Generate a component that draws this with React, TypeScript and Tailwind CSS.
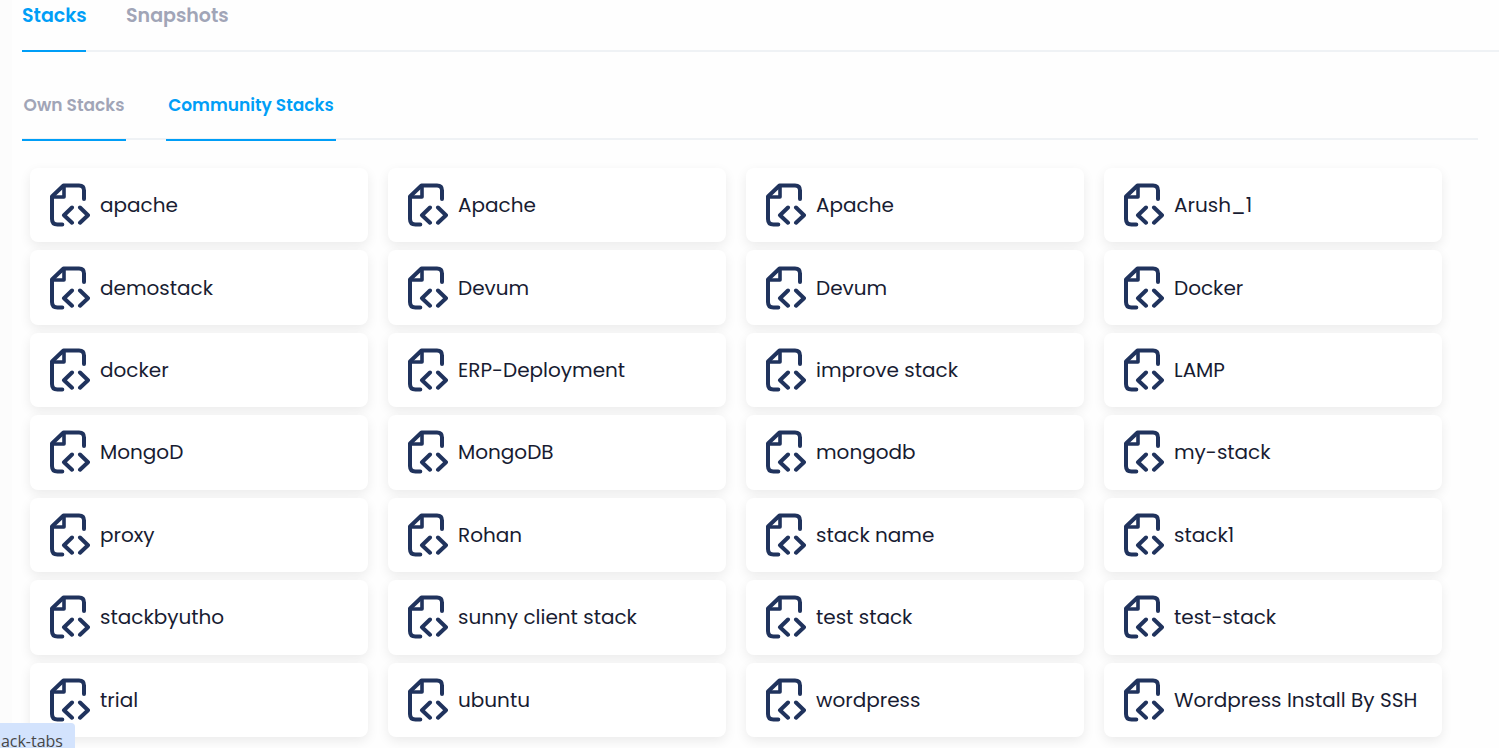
const stacks = [
  "apache", "Apache", "Apache", "Arush_1",
  "demostack", "Devum", "Devum", "Docker",
  "docker", "ERP-Deployment", "improve stack", "LAMP",
  "MongoD", "MongoDB", "mongodb", "my-stack",
  "proxy", "Rohan", "stack name", "stack1",
  "stackbyutho", "sunny client stack", "test stack", "test-stack",
  "trial", "ubuntu", "wordpress", "Wordpress Install By SSH",
];

function CodeFileIcon() {
  return (
    <svg
      className="h-11 w-10 shrink-0"
      viewBox="0 0 40 44"
      fill="none"
      stroke="#20335d"
      strokeWidth="4"
      strokeLinecap="round"
      strokeLinejoin="round"
      aria-hidden="true"
    >
      <path d="M12.300 41.500H7.500C3.800 41.500 2 39.500 2 36V13.500L13.500 2.500H29C32.500 2.500 34 4.200 34 7.500V16" />
      <path d="M14 3.500V14H3" strokeWidth="3.600" />
      <path d="M22 24.500L14 32.200L22 39.700M30 24.500L38 32.200L30 39.700" />
    </svg>
  );
}

export default function App() {
  return (
    <main className="h-screen overflow-hidden border-l-[12px] border-[#fcfcfc] bg-[#fefefe] font-[Poppins,Inter,sans-serif]">
      <nav aria-label="Sections" className="ml-2.5 flex h-[52px] gap-10 border-b-2 border-[#eff2f5] text-[19px] leading-7 font-semibold">
        <button className="-mb-0.5 w-16 border-b-2 border-[#009ef7] pb-[18px] text-[#009ef7]">Stacks</button>
        <button className="-mb-0.5 border-b-2 border-transparent pb-[18px] text-[#a1a5b7]">Snapshots</button>
      </nav>
      <nav aria-label="Stack lists" className="mt-8 mr-[21px] ml-2.5 flex h-14 gap-10 border-b-2 border-[#eff2f5] text-[17px] leading-7 font-semibold">
        <button className="-mb-[3px] min-w-[104px] border-b-2 border-[#009ef7] pb-3.5 text-[#a1a5b7]">Own Stacks</button>
        <button className="-mb-[3px] min-w-[170px] border-b-2 border-[#009ef7] pb-3.5 text-[#009ef7]">Community Stacks</button>
      </nav>
      <ul className="mt-7 mr-[57px] ml-[18px] grid min-h-[569px] auto-rows-fr grid-cols-4 gap-x-5 gap-y-2">
        {stacks.map((name, index) => (
          <li key={index} className="flex">
            <button className="flex w-full items-center gap-2.5 rounded-lg bg-white px-5 text-left text-xl text-[#181c32] shadow-[0_4px_12px_rgba(0,0,0,0.08)]">
              <CodeFileIcon />
              <span className="whitespace-nowrap">{name}</span>
            </button>
          </li>
        ))}
      </ul>
      <div className="fixed bottom-0 left-0 flex h-[25px] w-[75px] justify-end overflow-hidden rounded-tr bg-[#d3e3fd] pt-1.5 pr-3 font-['Open_Sans',sans-serif] text-base text-[#474747]">
        <span>ack-tabs</span>
      </div>
    </main>
  );
}
